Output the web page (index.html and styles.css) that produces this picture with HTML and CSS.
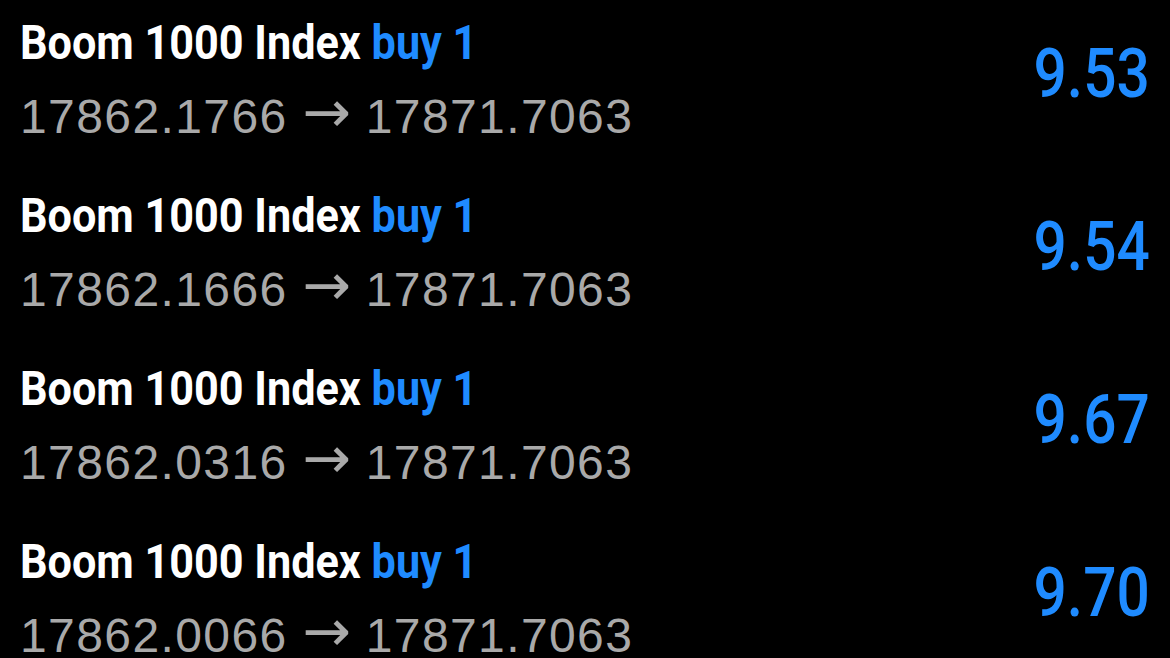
FILE: index.html
```html
<!DOCTYPE html>
<html>
<head>
<meta charset="utf-8">
<link rel="stylesheet" href="styles.css">
</head>
<body>
<div class="list">
  <div class="row">
    <div class="info">
      <div class="title"><span class="name">Boom 1000 Index</span> <span class="side">buy 1</span></div>
      <div class="prices">17862.1766 <span class="arrow">→</span> 17871.7063</div>
    </div>
    <div class="profit">9.53</div>
  </div>
  <div class="row">
    <div class="info">
      <div class="title"><span class="name">Boom 1000 Index</span> <span class="side">buy 1</span></div>
      <div class="prices">17862.1666 <span class="arrow">→</span> 17871.7063</div>
    </div>
    <div class="profit">9.54</div>
  </div>
  <div class="row">
    <div class="info">
      <div class="title"><span class="name">Boom 1000 Index</span> <span class="side">buy 1</span></div>
      <div class="prices">17862.0316 <span class="arrow">→</span> 17871.7063</div>
    </div>
    <div class="profit">9.67</div>
  </div>
  <div class="row">
    <div class="info">
      <div class="title"><span class="name">Boom 1000 Index</span> <span class="side">buy 1</span></div>
      <div class="prices">17862.0066 <span class="arrow">→</span> 17871.7063</div>
    </div>
    <div class="profit">9.70</div>
  </div>
</div>
</body>
</html>
```
FILE: styles.css
```css
html, body {
  margin: 0;
  padding: 0;
  background: #000;
}
body {
  width: 1170px;
  height: 658px;
  overflow: hidden;
}
.list {
  display: flex;
  flex-direction: column;
}
.row {
  height: 173px;
  box-sizing: border-box;
  padding: 15px 20px 0 20px;
  display: flex;
  justify-content: space-between;
  align-items: flex-start;
}
.info {
  display: flex;
  flex-direction: column;
  gap: 13px;
}
.title {
  font-family: Roboto, "Liberation Sans", sans-serif;
  font-weight: 700;
  font-size: 48px;
  line-height: 56px;
  color: #fff;
  white-space: nowrap;
  transform: scaleX(0.9);
  transform-origin: left center;
}
.side {
  color: #1f8bff;
}
.prices {
  font-family: "Liberation Sans", Arial, sans-serif;
  font-size: 48px;
  line-height: 56px;
  letter-spacing: 1.4px;
  color: #a9a9a9;
  white-space: nowrap;
}
.arrow {
  font-family: "DejaVu Sans", sans-serif;
  font-size: 58px;
  line-height: 56px;
  letter-spacing: 0;
  vertical-align: 1px;
}
.profit {
  margin-top: 24px;
  font-family: Roboto, "Liberation Sans", sans-serif;
  font-weight: 500;
  font-size: 69px;
  line-height: 69px;
  color: #1f8bff;
  transform: scaleX(0.85);
  transform-origin: right center;
}
```
